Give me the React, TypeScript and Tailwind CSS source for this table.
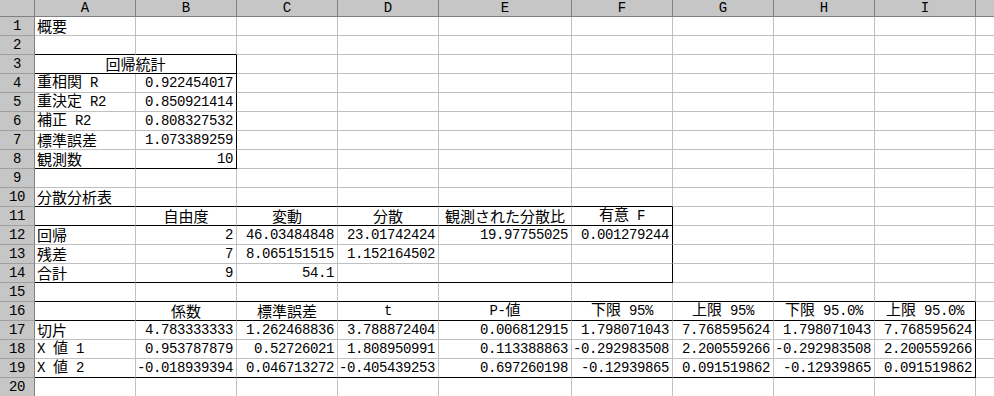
import React from 'react'

// 列幅（右の罫線込み）
const COLS = [101, 101, 101, 101, 133, 101, 101, 101, 101, 101]
const LETTERS = ['A', 'B', 'C', 'D', 'E', 'F', 'G', 'H', 'I', 'J']

const ROWS: string[][] = [
  ['概要'],
  [],
  ['回帰統計'],
  ['重相関 R', '0.922454017'],
  ['重決定 R2', '0.850921414'],
  ['補正 R2', '0.808327532'],
  ['標準誤差', '1.073389259'],
  ['観測数', '10'],
  [],
  ['分散分析表'],
  ['', '自由度', '変動', '分散', '観測された分散比', '有意 F'],
  ['回帰', '2', '46.03484848', '23.01742424', '19.97755025', '0.001279244'],
  ['残差', '7', '8.065151515', '1.152164502'],
  ['合計', '9', '54.1'],
  [],
  ['', '係数', '標準誤差', 't', 'P-値', '下限 95%', '上限 95%', '下限 95.0%', '上限 95.0%'],
  ['切片', '4.783333333', '1.262468836', '3.788872404', '0.006812915', '1.798071043', '7.768595624', '1.798071043', '7.768595624'],
  ['X 値 1', '0.953787879', '0.52726021', '1.808950991', '0.113388863', '-0.292983508', '2.200559266', '-0.292983508', '2.200559266'],
  ['X 値 2', '-0.018939394', '0.046713272', '-0.405439253', '0.697260198', '-0.12939865', '0.091519862', '-0.12939865', '0.091519862'],
  [],
]

// 罫線で囲まれた表（行番号は1始まり、列は0始まり）
const TABLES = [
  { r0: 3, r1: 8, c0: 0, c1: 1 },
  { r0: 11, r1: 14, c0: 0, c1: 5 },
  { r0: 16, r1: 19, c0: 0, c1: 8 },
]
const HEADER_ROWS = [11, 16]

const isNum = (s: string) => /^-?[\d.]+$/.test(s)

// 半角は等幅、全角は CJK フォントで（ひとつの行内ボックスでベースラインを揃える）
function Txt({ s }: { s: string }) {
  const parts = s.split(/([\x00-\x7f]+)/).filter(Boolean)
  return (
    <span className="block leading-[16px] whitespace-pre">
      {parts.map((p, i) =>
        /^[\x00-\x7f]+$/.test(p) ? (
          <span key={i} className="font-['Liberation_Mono',monospace] text-[14px] tracking-[-0.4px]">
            {p}
          </span>
        ) : (
          <span key={i} className="font-['Noto_Sans_CJK_JP',sans-serif] text-[15px]">
            {p}
          </span>
        ),
      )}
    </span>
  )
}

function bottomBlack(r: number, c: number) {
  return TABLES.some(t => c >= t.c0 && c <= t.c1 && (r === t.r0 - 1 || r === t.r0 || r === t.r1))
}
function rightBlack(r: number, c: number) {
  return TABLES.some(t => r >= t.r0 && r <= t.r1 && c === t.c1)
}

function Cell({ r, c, text }: { r: number; c: number; text: string }) {
  const num = isNum(text)
  const center = HEADER_ROWS.includes(r)
  const align = center ? 'justify-center' : num ? 'justify-end pr-[3px]' : 'justify-start pl-[2px]'
  return (
    <div
      style={{ width: COLS[c] }}
      className={`h-[19px] shrink-0 flex items-end pb-[1px] text-black border-r border-b whitespace-nowrap ${align} ${
        rightBlack(r, c) ? 'border-r-black' : 'border-r-[#c0c0c0]'
      } ${bottomBlack(r, c) ? 'border-b-black' : 'border-b-[#c0c0c0]'}`}
    >
      {text && <Txt s={text} />}
    </div>
  )
}

export default function App() {
  return (
    <div className="w-[994px] h-[396px] overflow-hidden bg-white select-none">
      {/* 列見出し */}
      <div className="flex h-[17px]">
        <div className="w-[35px] shrink-0 bg-[#c6c6c6] border-r border-b border-r-[#808080] border-b-[#808080]" />
        {COLS.map((w, i) => (
          <div
            key={i}
            style={{ width: w }}
            className="shrink-0 bg-[#c6c6c6] border-r border-b border-r-[#808080] border-b-[#808080] flex items-center justify-center font-['Liberation_Mono',monospace] text-[14px] leading-none text-black"
          >
            {LETTERS[i]}
          </div>
        ))}
      </div>

      {ROWS.map((row, ri) => {
        const r = ri + 1
        return (
          <div key={r} className="flex h-[19px]">
            <div className="w-[35px] shrink-0 bg-[#c6c6c6] border-r border-b border-r-[#808080] border-b-[#a0a0a0] flex items-end justify-center pb-[1px] leading-[16px] font-['Liberation_Mono',monospace] text-[14px] tracking-[-0.4px] text-black">
              {r}
            </div>
            {r === 3 ? (
              <>
                {/* A3:B3 結合セル */}
                <div className="w-[202px] h-[19px] shrink-0 flex items-end justify-center pb-[1px] border-r border-b border-r-black border-b-black">
                  <Txt s={row[0]} />
                </div>
                {COLS.slice(2).map((_, k) => (
                  <Cell key={k} r={r} c={k + 2} text="" />
                ))}
              </>
            ) : (
              COLS.map((_, c) => <Cell key={c} r={r} c={c} text={row[c] ?? ''} />)
            )}
          </div>
        )
      })}
    </div>
  )
}
